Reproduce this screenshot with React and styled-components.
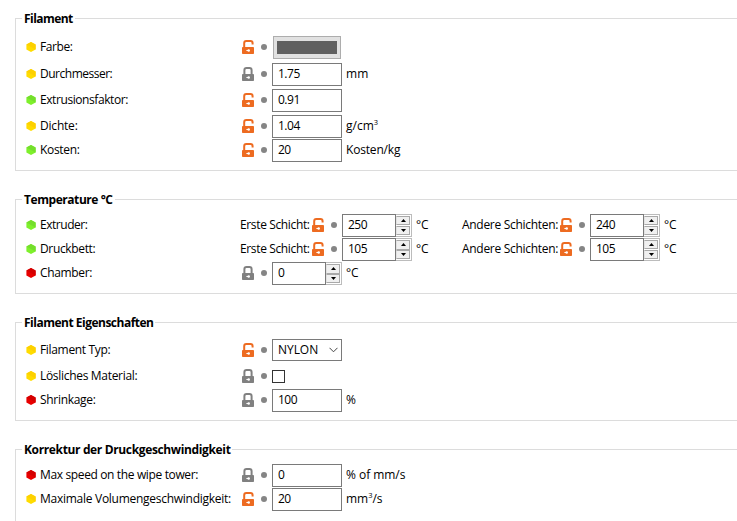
import React from "react";
import styled, { createGlobalStyle } from "styled-components";

const GlobalStyle = createGlobalStyle`
  *, *::before, *::after { box-sizing: border-box; }
  html, body { margin: 0; background: #fff; overflow: hidden; }
  body {
    color: #000;
    font-family: "Open Sans", "Noto Sans", sans-serif;
    font-size: 12px;
  }
`;

const Page = styled.main`
  display: flex;
  flex-direction: column;
  gap: 28px;
  width: 737px;
  height: 521px;
  padding: 18px 0 0 15px;
  overflow: hidden;
`;

const Group = styled.section`
  flex: none;
  height: ${(p) => p.$height}px;
  border: 1px solid #dcdcdc;
  border-right: 0;
`;

const Legend = styled.h2`
  width: fit-content;
  height: 16px;
  margin: -9px 0 ${(p) => p.$gap}px 6px;
  padding: 0 2px;
  background: #fff;
  font-size: 12px;
  font-weight: 700;
  line-height: 18px;
  letter-spacing: ${(p) => p.$track}px;
  white-space: nowrap;
`;

const Row = styled.div`
  display: flex;
  align-items: center;
  height: 23px;
  margin-top: ${(p) => p.$gap || 0}px;
  padding-left: 10px;
  white-space: nowrap;
`;

const Text = styled.span`
  display: block;
  height: 23px;
  line-height: 21px;
  letter-spacing: ${(p) => p.$track || 0}px;
  white-space: nowrap;
`;

const Label = styled(Text)`
  width: 200px;
  margin-left: 4px;
`;

const SubLabel = styled(Text)`
  width: ${(p) => p.$width}px;
`;

const Unit = styled(Text)`
  width: 46px;
  margin-left: 4px;
`;

const Sup = styled.sup`
  display: inline-block;
  font-size: 7.5px;
  line-height: 1;
  vertical-align: 5.5px;
  letter-spacing: 0;
`;

const Control = styled.div`
  display: flex;
  align-items: center;
  height: 23px;
  margin-left: 2px;
`;

const Dot = styled.i`
  width: 6px;
  height: 6px;
  margin: 0 5px 1px 7px;
  border-radius: 50%;
  background: #858585;
`;

const Icon = styled.svg`
  display: block;
  flex: none;
  margin-bottom: 1px;
`;

const Field = styled.div`
  width: ${(p) => p.$width || 70}px;
  height: 23px;
  padding-left: 5px;
  border: 1px solid #7a7a7a;
  background: #fff;
  line-height: 19px;
  letter-spacing: -0.5px;
`;

const SpinBox = styled.div`
  display: flex;
  width: 70px;
  height: 23px;
  border: 1px solid #bcbcbc;
  border-left: 0;
  background: #fff;

  ${Field} { margin: -1px 0; }
`;

const SpinButtons = styled.div`
  display: flex;
  flex-direction: column;
  justify-content: space-between;
  width: 14px;
  padding: 1px 0;
`;

const SpinButton = styled.span`
  display: flex;
  align-items: center;
  justify-content: center;
  height: ${(p) => (p.$tight ? 9.5 : 9)}px;
  border: 1px solid #a9a9a9;
  border-left-color: #e2e2e2;
  background: #f0f0f0;
`;

const Swatch = styled.div`
  width: 68px;
  height: 23px;
  margin-left: 1px;
  padding: 4px 3px;
  border: 1px solid #adadad;
  background: #e1e1e1;

  &::after {
    content: "";
    display: block;
    height: 13px;
    background: #606060;
  }
`;

const Select = styled.div`
  display: flex;
  justify-content: space-between;
  align-items: center;
  width: 70px;
  height: 22px;
  margin-bottom: 1px;
  padding: 0 3px 0 5px;
  border: 1px solid #7a7a7a;
  letter-spacing: -0.05px;
`;

const SelectText = styled.span`
  height: 20px;
  line-height: 19px;
`;

const Checkbox = styled.div`
  width: 13px;
  height: 13px;
  border: 1px solid #333;
`;

const MODES = {
  yellow: ["#ffdc00", "#fdd000"],
  green: ["#7ef02c", "#74de2c"],
  red: ["#e80000", "#d40000"],
};

function Mode({ color }) {
  const [light, dark] = MODES[color];
  return (
    <Icon width="10" height="10" viewBox="0 0 10 10">
      <path d="M5 0 9.6 2.5v5L5 10 .4 7.5v-5z" fill={light} />
      <path d="M5 0 9.6 2.5v5L.4 2.5z" fill={dark} />
    </Icon>
  );
}

function Lock({ open }) {
  const color = open ? "#ed6b21" : "#808080";
  return (
    <Icon width="12" height="14" viewBox="0 0 12 14">
      <path
        d={open ? "M2.2 8V3.2Q2.2 1.1 4.3 1.1h4.2Q10.6 1.1 10.6 3.2V4.6" : "M2.4 8V3.2Q2.4 1.1 4.5 1.1h3Q9.6 1.1 9.6 3.2V8"}
        fill="none"
        stroke={color}
        strokeWidth="2"
      />
      <rect y="7" width="12" height="7" rx="0.8" fill={color} />
      <path d="M4.4 10.5h2" stroke="#fff" strokeWidth="1" />
      <circle cx="6.7" cy="10.5" r="1.25" fill="#fff" />
    </Icon>
  );
}

function Arrow({ down }) {
  return (
    <svg width="5" height="3" viewBox="0 0 5 3">
      <path d={down ? "M0 0h5L2.5 3z" : "M0 3h5L2.5 0z"} fill="#000" />
    </svg>
  );
}

function Spin({ value, tight }) {
  return (
    <SpinBox>
      <Field $width={54}>{value}</Field>
      <SpinButtons>
        <SpinButton $tight={tight}><Arrow /></SpinButton>
        <SpinButton $tight={tight}><Arrow down /></SpinButton>
      </SpinButtons>
    </SpinBox>
  );
}

function Value({ locked, children }) {
  return (
    <Control>
      <Lock open={!locked} />
      <Dot />
      {children}
    </Control>
  );
}

function Option({ mode, label, track, gap, children }) {
  return (
    <Row $gap={gap}>
      <Mode color={mode} />
      <Label $track={track}>{label}</Label>
      {children}
    </Row>
  );
}

function Layers({ first, other, tight }) {
  return (
    <>
      <SubLabel $width={70} $track={-0.36}>Erste Schicht:</SubLabel>
      <Value><Spin value={first} tight={tight} /></Value>
      <Unit $track={-0.2}>°C</Unit>
      <SubLabel $width={96} $track={-0.3}>Andere Schichten:</SubLabel>
      <Value><Spin value={other} /></Value>
      <Unit $track={-0.2}>°C</Unit>
    </>
  );
}

export default function App() {
  return (
    <>
      <GlobalStyle />
      <Page>
        <Group $height={153}>
          <Legend $gap={10} $track={-0.55}>Filament</Legend>
          <Option mode="yellow" label="Farbe:" track={-0.4}>
            <Value><Swatch /></Value>
          </Option>
          <Option mode="yellow" label="Durchmesser:" track={-0.49} gap={4}>
            <Value locked><Field>1.75</Field></Value>
            <Unit $track={0.1}>mm</Unit>
          </Option>
          <Option mode="green" label="Extrusionsfaktor:" track={-0.42} gap={3}>
            <Value><Field>0.91</Field></Value>
          </Option>
          <Option mode="yellow" label="Dichte:" track={-0.2} gap={3}>
            <Value><Field>1.04</Field></Value>
            <Unit $track={0}>g/cm<Sup>3</Sup></Unit>
          </Option>
          <Option mode="green" label="Kosten:" track={-0.33} gap={1}>
            <Value><Field>20</Field></Value>
            <Unit $track={-0.18}>Kosten/kg</Unit>
          </Option>
        </Group>

        <Group $height={95}>
          <Legend $gap={7} $track={-0.44}>Temperature °C</Legend>
          <Option mode="green" label="Extruder:" track={-0.47}>
            <Layers first="250" other="240" />
          </Option>
          <Option mode="green" label="Druckbett:" track={-0.35} gap={1}>
            <Layers first="105" other="105" tight />
          </Option>
          <Option mode="red" label="Chamber:" track={-0.35} gap={1}>
            <Value locked><Spin value="0" tight /></Value>
            <Unit $track={-0.2}>°C</Unit>
          </Option>
        </Group>

        <Group $height={99}>
          <Legend $gap={9} $track={-0.5}>Filament Eigenschaften</Legend>
          <Option mode="yellow" label="Filament Typ:" track={-0.33}>
            <Value>
              <Select>
                <SelectText>NYLON</SelectText>
                <svg width="9" height="6" viewBox="0 0 9 6">
                  <path d="M.5.8l4 4 4-4" fill="none" stroke="#444" />
                </svg>
              </Select>
            </Value>
          </Option>
          <Option mode="yellow" label="Lösliches Material:" track={-0.31} gap={3}>
            <Value locked><Checkbox /></Value>
          </Option>
          <Option mode="red" label="Shrinkage:" track={-0.31} gap={1}>
            <Value locked><Field>100</Field></Value>
            <Unit>%</Unit>
          </Option>
        </Group>

        <Group $height={95}>
          <Legend $gap={7} $track={-0.36}>Korrektur der Druckgeschwindigkeit</Legend>
          <Option mode="red" label="Max speed on the wipe tower:" track={-0.36}>
            <Value locked><Field>0</Field></Value>
            <Unit $track={-0.04}>% of mm/s</Unit>
          </Option>
          <Option mode="yellow" label="Maximale Volumengeschwindigkeit:" track={-0.27} gap={1}>
            <Value><Field>20</Field></Value>
            <Unit $track={-0.05}>mm<Sup>3</Sup>/s</Unit>
          </Option>
        </Group>
      </Page>
    </>
  );
}
